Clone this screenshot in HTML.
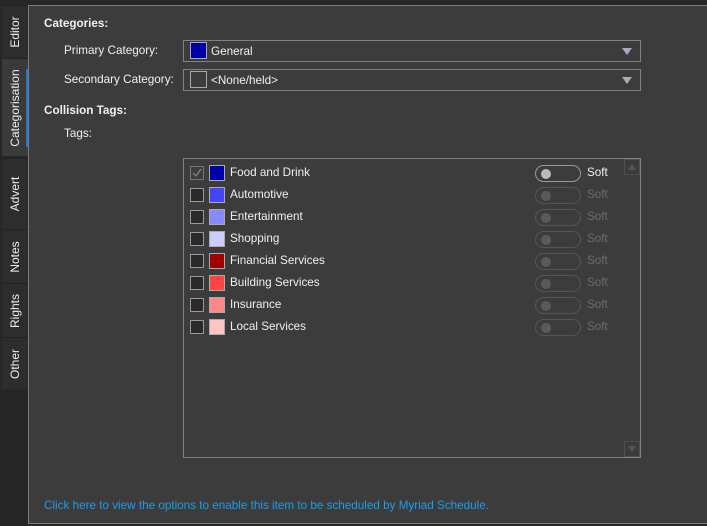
<!DOCTYPE html>
<html><head><meta charset="utf-8"><style>
*{box-sizing:border-box;margin:0;padding:0}
body{width:707px;height:526px;background:#262626;font-family:"Segoe UI","Liberation Sans",sans-serif;font-size:11.7px;color:#f0f0f0;position:relative;overflow:hidden}
.a{position:absolute}
.tab{position:absolute;left:2px;width:26px;background:#2d2d2d;border-top:1px solid #222}
.tab span{position:absolute;left:50%;top:50%;transform:translate(-50%,-50%) rotate(-90deg);white-space:nowrap;color:#eee;font-size:12px}
.panel{left:28px;top:5px;width:682px;height:519px;background:#3c3c3c;border:1px solid #7d7d7d;border-right:none}
.dd{left:183px;width:458px;height:22px;border:1px solid #828282;background:#3c3c3c}
.sw{position:absolute;width:17px;height:17px;border:1px solid #aaa}
.tri{position:absolute;right:8px;top:7px;width:0;height:0;border-left:5px solid transparent;border-right:5px solid transparent;border-top:7px solid #aab}
.row{position:absolute;left:0;height:22px;width:458px}
.cb{position:absolute;left:6px;top:4px;width:14px;height:14px;border:1px solid #999;background:#2a2a2a}
.row .sw{left:25px;top:3px;width:16px;height:16px}
.row .t{position:absolute;left:46px;top:4px}
.tg{position:absolute;left:351px;top:3px;width:46px;height:17px;border:1px solid #555;border-radius:9px}
.tg i{position:absolute;left:5px;top:3px;width:10px;height:10px;border-radius:50%;background:#5a5a5a}
.soft{position:absolute;left:403px;top:4px;color:#6c6c6c}
</style></head><body>
<div class="tab" style="top:5px;height:53px"><span>Editor</span></div>
<div class="tab" style="top:58px;height:98px;background:#3a3a3a"><span>Categorisation</span><div class="a" style="right:0;top:10px;width:2px;height:78px;background:#1e78d0"></div></div>
<div class="tab" style="top:158px;height:71px"><span>Advert</span></div>
<div class="tab" style="top:229px;height:54px"><span>Notes</span></div>
<div class="tab" style="top:283px;height:54px"><span>Rights</span></div>
<div class="tab" style="top:337px;height:52px"><span>Other</span></div>
<div class="a panel"></div>
<div class="a" style="left:44px;top:17px;font-weight:bold">Categories:</div>
<div class="a" style="left:64px;top:44px">Primary Category:</div>
<div class="a" style="left:64px;top:73px">Secondary Category:</div>
<div class="a" style="left:44px;top:104px;font-weight:bold">Collision Tags:</div>
<div class="a" style="left:64px;top:127px">Tags:</div>
<div class="a dd" style="top:40px"><div class="sw" style="left:6px;top:1px;background:#0000a8"></div><div class="a" style="left:27px;top:4px">General</div><div class="tri"></div></div>
<div class="a dd" style="top:69px"><div class="sw" style="left:6px;top:1px;background:#3c3c3c"></div><div class="a" style="left:27px;top:4px">&lt;None/held&gt;</div><div class="tri"></div></div>
<div class="a" style="left:183px;top:158px;width:458px;height:300px;border:1px solid #828282">
<div class="a" style="right:0;top:0;width:16px;height:16px;border:1px solid #505050"><div class="a" style="left:3px;top:4px;border-left:4px solid transparent;border-right:4px solid transparent;border-bottom:6px solid #555"></div></div>
<div class="a" style="right:0;bottom:0;width:16px;height:16px;border:1px solid #505050"><div class="a" style="left:3px;top:4px;border-left:4px solid transparent;border-right:4px solid transparent;border-top:6px solid #555"></div></div>
<div class="row" style="top:3px"><div class="cb" style="background:#3c3c3c;border-color:#777"><svg width="12" height="12" style="position:absolute;left:0;top:0"><path d="M2 6 L5 9 L10 2" stroke="#888" stroke-width="1.2" fill="none"/></svg></div><div class="sw" style="background:#0000a8"></div><div class="t">Food and Drink</div><div class="tg" style="border-color:#999"><i style="background:#bbb"></i></div><div class="soft" style="color:#f0f0f0">Soft</div></div>
<div class="row" style="top:25px"><div class="cb"></div><div class="sw" style="background:#4444ff"></div><div class="t">Automotive</div><div class="tg"><i></i></div><div class="soft">Soft</div></div>
<div class="row" style="top:47px"><div class="cb"></div><div class="sw" style="background:#8888ff"></div><div class="t">Entertainment</div><div class="tg"><i></i></div><div class="soft">Soft</div></div>
<div class="row" style="top:69px"><div class="cb"></div><div class="sw" style="background:#ccccff"></div><div class="t">Shopping</div><div class="tg"><i></i></div><div class="soft">Soft</div></div>
<div class="row" style="top:91px"><div class="cb"></div><div class="sw" style="background:#a00000"></div><div class="t">Financial Services</div><div class="tg"><i></i></div><div class="soft">Soft</div></div>
<div class="row" style="top:113px"><div class="cb"></div><div class="sw" style="background:#ff4444"></div><div class="t">Building Services</div><div class="tg"><i></i></div><div class="soft">Soft</div></div>
<div class="row" style="top:135px"><div class="cb"></div><div class="sw" style="background:#ff8888"></div><div class="t">Insurance</div><div class="tg"><i></i></div><div class="soft">Soft</div></div>
<div class="row" style="top:157px"><div class="cb"></div><div class="sw" style="background:#ffc4c4"></div><div class="t">Local Services</div><div class="tg"><i></i></div><div class="soft">Soft</div></div>
</div>
<div class="a" style="left:44px;top:499px;color:#1e9ce8">Click here to view the options to enable this item to be scheduled by Myriad Schedule.</div>
</body></html>
